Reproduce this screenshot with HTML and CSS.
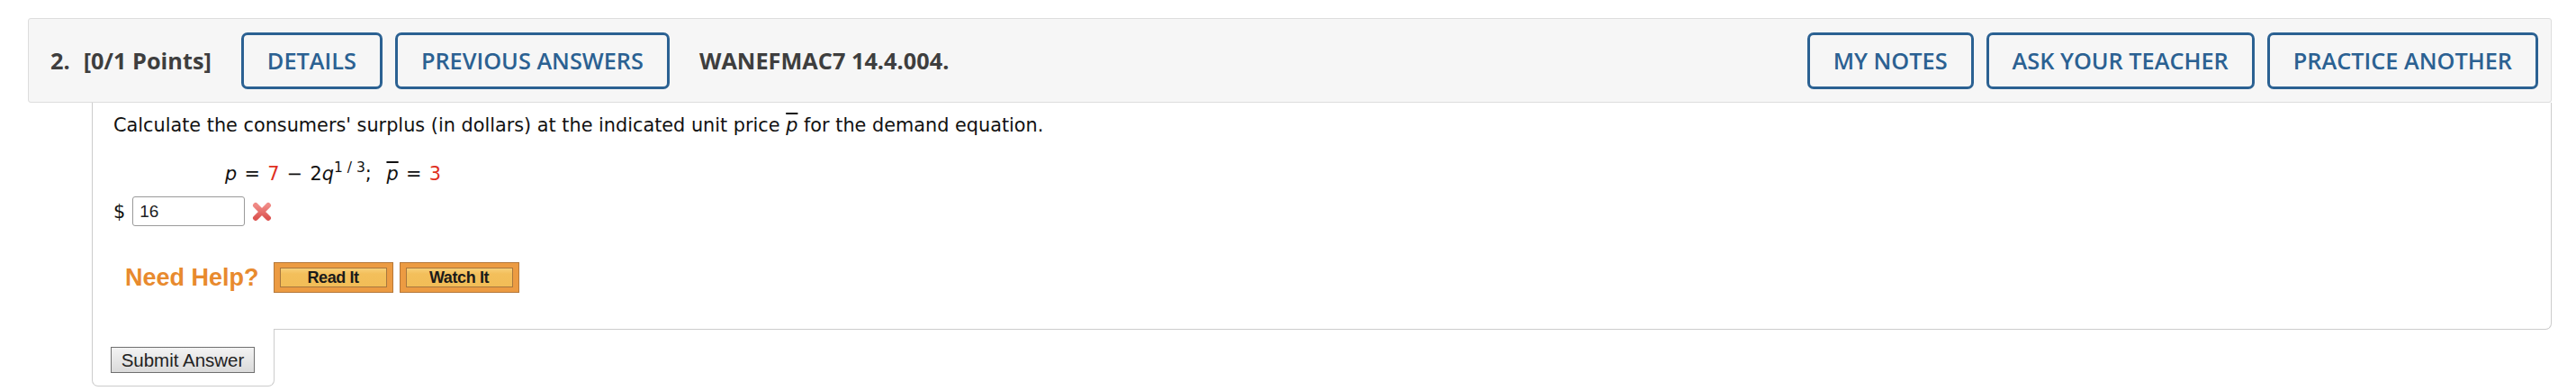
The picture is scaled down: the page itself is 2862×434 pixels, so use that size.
FILE: index.html
```html
<!DOCTYPE html>
<html lang="en">
<head>
<meta charset="utf-8">
<title>Question 2</title>
<link rel="stylesheet" href="styles.css">
</head>
<body>
<div class="question">
  <div class="qhead">
    <div class="qtitle"><span class="qnum">2.</span>[0/1 Points]</div>
    <button class="hbtn first">DETAILS</button>
    <button class="hbtn">PREVIOUS ANSWERS</button>
    <div class="qid">WANEFMAC7 14.4.004.</div>
    <div class="spacer"></div>
    <button class="hbtn">MY NOTES</button>
    <button class="hbtn">ASK YOUR TEACHER</button>
    <button class="hbtn">PRACTICE ANOTHER</button>
  </div>
  <div class="qbody">
    <p class="prompt">Calculate the consumers' surplus (in dollars) at the indicated unit price <span class="it bar">p</span> for the demand equation.</p>
    <div class="eq"><span class="it">p</span> = <span class="red">7</span> − 2<span class="it">q</span><sup class="sup">1 / 3</sup>; &nbsp;<span class="it bar">p</span> = <span class="red">3</span></div>
    <div class="answer">
      <span class="dollar">$</span>
      <input class="ans-input" type="text" value="16">
      <svg class="wrong" width="22" height="22" viewBox="0 0 22 22" aria-label="incorrect">
        <defs>
          <linearGradient id="xg" x1="0" y1="0" x2="0" y2="1">
            <stop offset="0" stop-color="#f08a86"/>
            <stop offset="1" stop-color="#dc5552"/>
          </linearGradient>
        </defs>
        <path d="M4 4 L18 18 M18 4 L4 18" stroke="url(#xg)" stroke-width="6" stroke-linecap="round"/>
      </svg>
    </div>
    <div class="help">
      <span class="need">Need Help?</span>
      <button class="hb"><span class="hb-in">Read It</span></button>
      <button class="hb"><span class="hb-in">Watch It</span></button>
    </div>
  </div>
  <div class="submit-tab">
    <button class="submit">Submit Answer</button>
  </div>
</div>
</body>
</html>
```
FILE: styles.css
```css
html, body {
  margin: 0;
  padding: 0;
  background: #ffffff;
}

.question {
  padding-top: 20px;
  width: 2835px;
}

.qhead {
  margin-left: 31px;
  height: 92px;
  background: #f6f6f6;
  border: 1px solid #dddddd;
  border-radius: 3px;
  display: flex;
  align-items: center;
  padding: 0 14px 0 24px;
  font-family: "Open Sans", "DejaVu Sans", sans-serif;
  font-size: 25.3px;
  color: #3e3e3e;
}

.qtitle {
  font-weight: 700;
  white-space: nowrap;
  margin-right: 33px;
}

.qnum {
  margin-right: 15px;
}

.qid {
  font-weight: 700;
  white-space: nowrap;
  margin-left: 33px;
}

.spacer {
  flex: 1;
}

.hbtn {
  height: 63px;
  padding: 0 26px;
  border: 3px solid #2b6192;
  border-radius: 7px;
  background: #f6f6f6;
  color: #2b6192;
  font-family: "Open Sans", "DejaVu Sans", sans-serif;
  font-size: 25.3px;
  font-weight: 600;
  white-space: nowrap;
  margin-left: 14px;
}

.hbtn.first {
  margin-left: 0;
}

.qbody {
  margin-left: 102px;
  border: 1px solid #cccccc;
  border-top: none;
  border-radius: 0 0 7px 0;
  padding: 13px 0 40px 23px;
  font-family: "DejaVu Sans", Verdana, sans-serif;
  font-size: 20.8px;
  color: #111111;
}

.prompt {
  margin: 0;
  line-height: 24px;
}

.it {
  font-style: italic;
}

.bar {
  text-decoration: overline;
}

.red {
  color: #e0301e;
}

.eq {
  margin: 30px 0 0 124px;
  line-height: 24px;
  word-spacing: 1.7px;
}

.sup {
  font-size: 15.5px;
  vertical-align: 9px;
  line-height: 0;
  word-spacing: 0;
}

.answer {
  margin-top: 13px;
  display: flex;
  align-items: center;
  height: 33px;
}

.dollar {
  margin-right: 8px;
}

.ans-input {
  width: 125px;
  height: 33px;
  box-sizing: border-box;
  border: 1px solid #9a9a9a;
  border-radius: 3px;
  padding: 0 7px;
  font-family: "Liberation Sans", Arial, sans-serif;
  font-size: 19px;
  color: #222222;
  background: #ffffff;
}

.wrong {
  margin-left: 8px;
}

.help {
  margin: 40px 0 0 13px;
  display: flex;
  align-items: center;
  height: 34px;
}

.need {
  font-family: "Liberation Sans", Arial, sans-serif;
  font-weight: 700;
  font-size: 27px;
  color: #e88a2e;
  margin-right: 16px;
}

.hb {
  width: 133px;
  height: 34px;
  box-sizing: border-box;
  padding: 5px 6px;
  border: 1px solid #b5783a;
  background: #ec9b42;
  margin-right: 7px;
  display: flex;
}

.hb-in {
  flex: 1;
  border: 1px solid #a8773e;
  background: linear-gradient(#f7cf78 0%, #f3bf5b 30%, #f2bd57 100%);
  font-family: "Liberation Sans", Arial, sans-serif;
  font-weight: 700;
  font-size: 18px;
  letter-spacing: -0.4px;
  color: #1a1a1a;
  display: flex;
  align-items: center;
  justify-content: center;
}

.submit-tab {
  margin-left: 102px;
  margin-top: -1px;
  width: 203px;
  box-sizing: border-box;
  height: 64px;
  background: #ffffff;
  border: 1px solid #cccccc;
  border-top: none;
  border-radius: 0 0 7px 7px;
  padding: 20px 0 0 20px;
}

.submit {
  width: 160px;
  height: 29px;
  box-sizing: border-box;
  border: 1px solid #707070;
  background: linear-gradient(#f3f3f3, #dadada);
  font-family: "Liberation Sans", Arial, sans-serif;
  font-size: 20.5px;
  color: #222222;
  padding: 0;
}
```
